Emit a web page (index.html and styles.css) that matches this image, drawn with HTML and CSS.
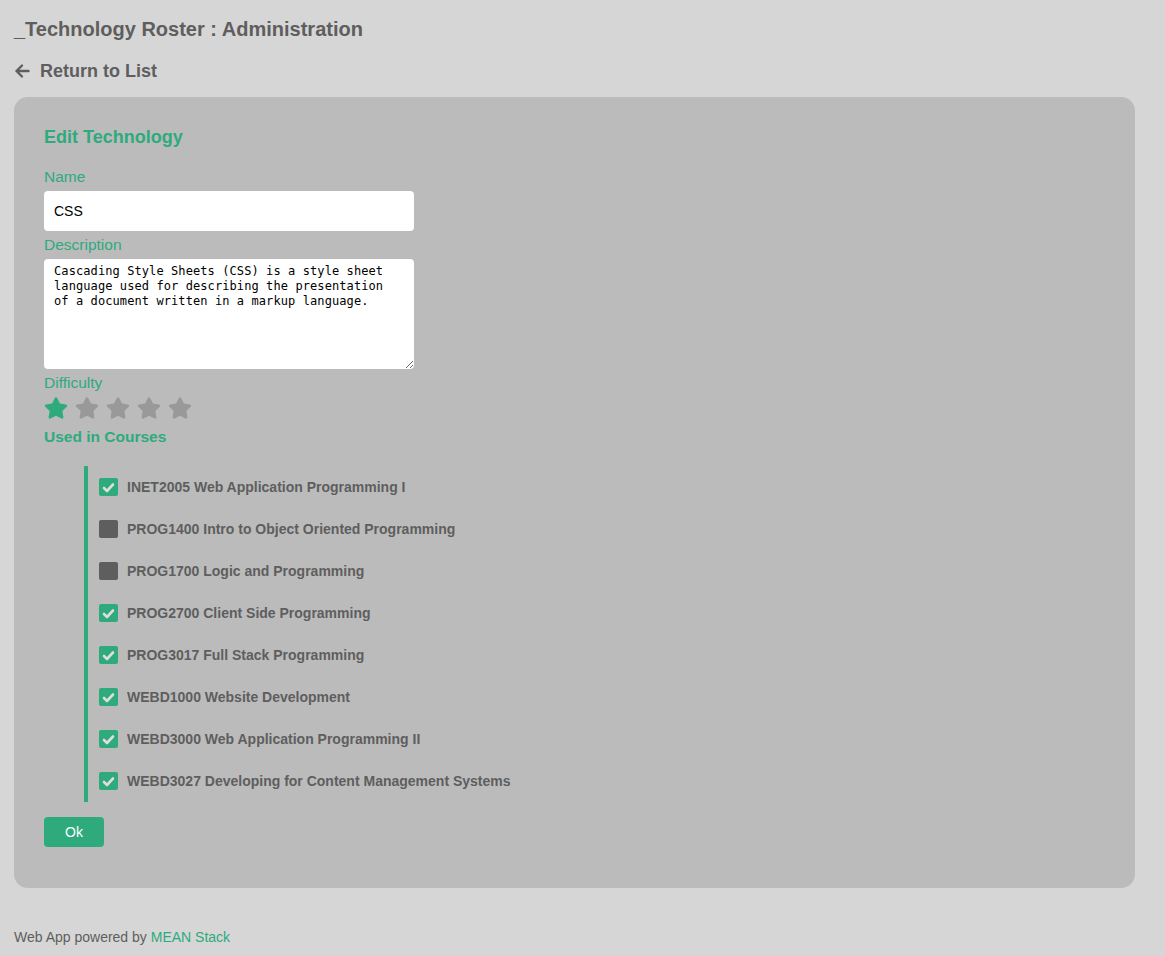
FILE: index.html
```html
<!DOCTYPE html>
<html lang="en">
<head>
<meta charset="utf-8">
<title>Technology Roster : Administration</title>
<link rel="stylesheet" href="styles.css">
</head>
<body>
<header class="header">
  <h1 class="title">_Technology Roster : Administration</h1>
  <a class="back" href="#">
    <svg class="back-icon" viewBox="0 0 16 16" width="16" height="16" aria-hidden="true">
      <path d="M14.5 8H2.5M8 2.5L2.5 8L8 13.5" fill="none" stroke="currentColor" stroke-width="2.4" stroke-linecap="round" stroke-linejoin="round"/>
    </svg>
    <span>Return to List</span>
  </a>
</header>

<main class="panel">
  <h2 class="panel-title">Edit Technology</h2>

  <label class="field-label" for="name">Name</label>
  <input class="text-input" id="name" type="text" value="CSS">

  <label class="field-label" for="desc">Description</label>
  <textarea class="text-area" id="desc">Cascading Style Sheets (CSS) is a style sheet language used for describing the presentation of a document written in a markup language.</textarea>

  <div class="field-label">Difficulty</div>
  <div class="stars">
    <svg class="star star-on" viewBox="0 0 576 512"><path d="M259.3 17.8L194 150.2 47.9 171.5c-26.2 3.8-36.7 36.1-17.7 54.6l105.7 103-25 145.5c-4.5 26.3 23.2 46 46.4 33.7L288 439.6l130.7 68.7c23.2 12.2 50.9-7.4 46.4-33.7l-25-145.5 105.7-103c19-18.5 8.5-50.8-17.7-54.6L382 150.2 316.7 17.8c-11.7-23.6-45.6-23.9-57.4 0z"/></svg>
    <svg class="star" viewBox="0 0 576 512"><path d="M259.3 17.8L194 150.2 47.9 171.5c-26.2 3.8-36.7 36.1-17.7 54.6l105.7 103-25 145.5c-4.5 26.3 23.2 46 46.4 33.7L288 439.6l130.7 68.7c23.2 12.2 50.9-7.4 46.4-33.7l-25-145.5 105.7-103c19-18.5 8.5-50.8-17.7-54.6L382 150.2 316.7 17.8c-11.7-23.6-45.6-23.9-57.4 0z"/></svg>
    <svg class="star" viewBox="0 0 576 512"><path d="M259.3 17.8L194 150.2 47.9 171.5c-26.2 3.8-36.7 36.1-17.7 54.6l105.7 103-25 145.5c-4.5 26.3 23.2 46 46.4 33.7L288 439.6l130.7 68.7c23.2 12.2 50.9-7.4 46.4-33.7l-25-145.5 105.7-103c19-18.5 8.5-50.8-17.7-54.6L382 150.2 316.7 17.8c-11.7-23.6-45.6-23.9-57.4 0z"/></svg>
    <svg class="star" viewBox="0 0 576 512"><path d="M259.3 17.8L194 150.2 47.9 171.5c-26.2 3.8-36.7 36.1-17.7 54.6l105.7 103-25 145.5c-4.5 26.3 23.2 46 46.4 33.7L288 439.6l130.7 68.7c23.2 12.2 50.9-7.4 46.4-33.7l-25-145.5 105.7-103c19-18.5 8.5-50.8-17.7-54.6L382 150.2 316.7 17.8c-11.7-23.6-45.6-23.9-57.4 0z"/></svg>
    <svg class="star" viewBox="0 0 576 512"><path d="M259.3 17.8L194 150.2 47.9 171.5c-26.2 3.8-36.7 36.1-17.7 54.6l105.7 103-25 145.5c-4.5 26.3 23.2 46 46.4 33.7L288 439.6l130.7 68.7c23.2 12.2 50.9-7.4 46.4-33.7l-25-145.5 105.7-103c19-18.5 8.5-50.8-17.7-54.6L382 150.2 316.7 17.8c-11.7-23.6-45.6-23.9-57.4 0z"/></svg>
  </div>

  <div class="courses-title">Used in Courses</div>
  <ul class="courses">
    <li class="course"><span class="box box-on"><svg viewBox="0 0 19 19"><path d="M5 10l3 3 6-6.5" fill="none" stroke="currentColor" stroke-width="2.6" stroke-linecap="round" stroke-linejoin="round"/></svg></span><span>INET2005 Web Application Programming I</span></li>
    <li class="course"><span class="box"></span><span>PROG1400 Intro to Object Oriented Programming</span></li>
    <li class="course"><span class="box"></span><span>PROG1700 Logic and Programming</span></li>
    <li class="course"><span class="box box-on"><svg viewBox="0 0 19 19"><path d="M5 10l3 3 6-6.5" fill="none" stroke="currentColor" stroke-width="2.6" stroke-linecap="round" stroke-linejoin="round"/></svg></span><span>PROG2700 Client Side Programming</span></li>
    <li class="course"><span class="box box-on"><svg viewBox="0 0 19 19"><path d="M5 10l3 3 6-6.5" fill="none" stroke="currentColor" stroke-width="2.6" stroke-linecap="round" stroke-linejoin="round"/></svg></span><span>PROG3017 Full Stack Programming</span></li>
    <li class="course"><span class="box box-on"><svg viewBox="0 0 19 19"><path d="M5 10l3 3 6-6.5" fill="none" stroke="currentColor" stroke-width="2.6" stroke-linecap="round" stroke-linejoin="round"/></svg></span><span>WEBD1000 Website Development</span></li>
    <li class="course"><span class="box box-on"><svg viewBox="0 0 19 19"><path d="M5 10l3 3 6-6.5" fill="none" stroke="currentColor" stroke-width="2.6" stroke-linecap="round" stroke-linejoin="round"/></svg></span><span>WEBD3000 Web Application Programming II</span></li>
    <li class="course"><span class="box box-on"><svg viewBox="0 0 19 19"><path d="M5 10l3 3 6-6.5" fill="none" stroke="currentColor" stroke-width="2.6" stroke-linecap="round" stroke-linejoin="round"/></svg></span><span>WEBD3027 Developing for Content Management Systems</span></li>
  </ul>

  <button class="ok-btn" type="button">Ok</button>
</main>

<footer class="footer">Web App powered by <a class="footer-link" href="#">MEAN Stack</a></footer>
</body>
</html>
```

FILE: styles.css
```css
html, body {
  margin: 0;
  padding: 0;
}

body {
  background: #d6d6d6;
  font-family: "Liberation Sans", Arial, sans-serif;
  color: #5e5e5e;
  padding: 0 30px 0 14px;
  min-height: 956px;
  box-sizing: border-box;
}

.header {
  padding-top: 17px;
}

.title {
  margin: 0;
  font-size: 20px;
  line-height: 24px;
  font-weight: bold;
  color: #5e5e5e;
}

.back {
  display: flex;
  align-items: center;
  gap: 10px;
  margin-top: 19px;
  height: 22px;
  font-size: 18px;
  font-weight: bold;
  color: #5e5e5e;
  text-decoration: none;
}

.back-icon {
  display: block;
  flex: none;
}

.panel {
  margin-top: 15px;
  background: #bbbbbb;
  border-radius: 14px;
  padding: 29px 30px 41px;
  display: flex;
  flex-direction: column;
  align-items: flex-start;
}

.panel-title {
  margin: 0;
  font-size: 18px;
  line-height: 22px;
  font-weight: bold;
  color: #2eaa7d;
}

.field-label {
  display: block;
  font-size: 15.5px;
  line-height: 16px;
  color: #2eaa7d;
  margin-top: 6px;
  margin-bottom: 6px;
}

.panel-title + .field-label {
  margin-top: 21px;
}

.text-input {
  box-sizing: border-box;
  width: 370px;
  height: 40px;
  border: none;
  border-radius: 4px;
  background: #ffffff;
  padding: 0 10px;
  font-family: "Liberation Sans", Arial, sans-serif;
  font-size: 14px;
  color: #000000;
  margin: 0;
  outline: none;
}

.text-area {
  box-sizing: border-box;
  width: 370px;
  height: 110px;
  border: none;
  border-radius: 4px;
  background: #ffffff;
  padding: 5px 20px 5px 10px;
  font-family: "DejaVu Sans Mono", "Liberation Mono", monospace;
  font-size: 12px;
  letter-spacing: 0.09px;
  line-height: 15px;
  color: #000000;
  margin: 0;
  resize: vertical;
  outline: none;
  overflow: hidden;
}

.stars {
  display: flex;
  gap: 7px;
  margin-top: -2px;
  height: 26px;
  align-items: center;
}

.star {
  width: 24px;
  height: 22px;
  fill: #999999;
  display: block;
}

.star-on {
  fill: #2eaa7d;
}

.courses-title {
  margin-top: 8px;
  font-size: 15.5px;
  line-height: 16px;
  font-weight: bold;
  color: #2eaa7d;
}

.courses {
  list-style: none;
  margin: 21px 0 0 40px;
  padding: 0 0 0 11px;
  border-left: 4px solid #2eaa7d;
}

.course {
  display: flex;
  align-items: center;
  gap: 9px;
  height: 42px;
  font-size: 14px;
  font-weight: bold;
  color: #5e5e5e;
}

.box {
  flex: none;
  width: 19px;
  height: 18px;
  border-radius: 2px;
  background: #5e5e5e;
  display: flex;
  align-items: center;
  justify-content: center;
  color: #dddddd;
}

.box svg {
  width: 19px;
  height: 19px;
  display: block;
}

.box-on {
  background: #2eaa7d;
}

.ok-btn {
  margin-top: 15px;
  width: 60px;
  height: 30px;
  border: none;
  border-radius: 4px;
  background: #2eaa7d;
  color: #ffffff;
  font-family: "Liberation Sans", Arial, sans-serif;
  font-size: 14px;
  padding: 0;
  cursor: pointer;
}

.footer {
  margin-top: 41px;
  font-size: 14px;
  line-height: 16px;
  color: #5e5e5e;
}

.footer-link {
  color: #2eaa7d;
  text-decoration: none;
}
```
